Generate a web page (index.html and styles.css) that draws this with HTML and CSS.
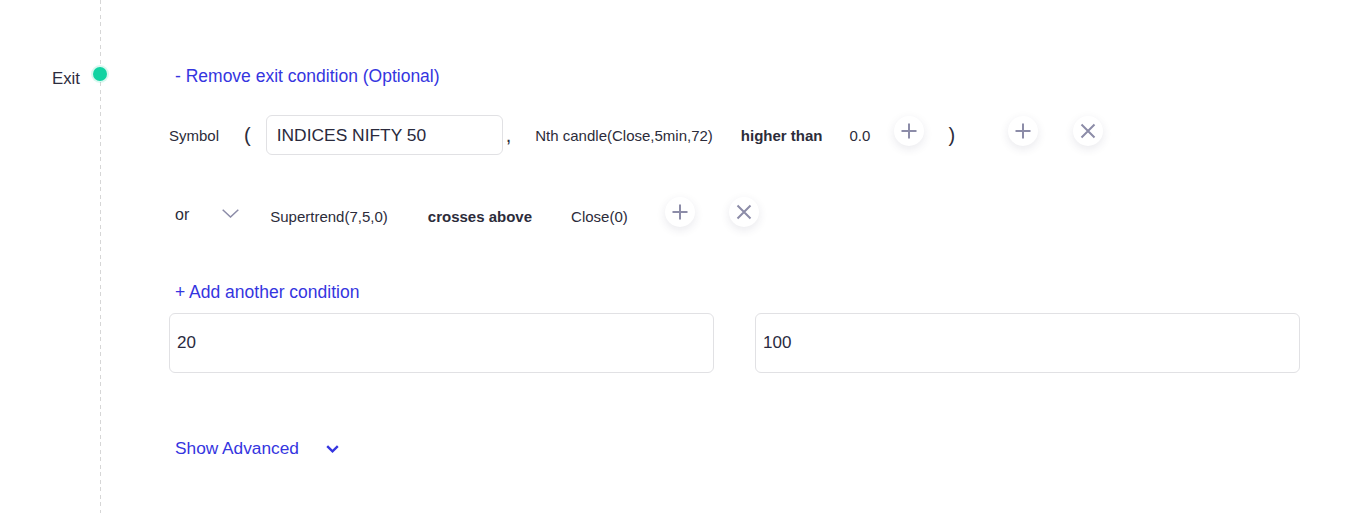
FILE: index.html
```html
<!DOCTYPE html>
<html>
<head>
<meta charset="utf-8">
<link rel="stylesheet" href="styles.css">
</head>
<body>
<div class="page">
  <div class="label-col"><span class="exit">Exit</span></div>
  <div class="rail"><span class="dot"></span></div>
  <div class="content">
    <div class="header"><a class="link">- Remove exit condition (Optional)</a></div>

    <div class="row row1">
      <span class="txt sym">Symbol</span>
      <span class="paren open">(</span>
      <div class="field"><span>INDICES NIFTY 50</span></div>
      <span class="paren comma">,</span>
      <span class="txt nth">Nth candle(Close,5min,72)</span>
      <span class="txt bold higher">higher than</span>
      <span class="txt val">0.0</span>
      <button class="circle btn-a" aria-label="add">
        <svg width="16" height="16" viewBox="0 0 16 16"><path d="M8 0.5V15.5M0.5 8H15.5" stroke="#8c8ca8" stroke-width="2" fill="none"/></svg>
      </button>
      <span class="paren close">)</span>
      <button class="circle btn-b" aria-label="add">
        <svg width="16" height="16" viewBox="0 0 16 16"><path d="M8 0.5V15.5M0.5 8H15.5" stroke="#8c8ca8" stroke-width="2" fill="none"/></svg>
      </button>
      <button class="circle btn-c" aria-label="remove">
        <svg width="16" height="16" viewBox="0 0 16 16"><path d="M1.5 1.5L14.5 14.5M14.5 1.5L1.5 14.5" stroke="#8c8ca8" stroke-width="2" fill="none"/></svg>
      </button>
    </div>

    <div class="row row2">
      <span class="or">or</span>
      <span class="chev">
        <svg width="17" height="9" viewBox="0 0 17 9"><path d="M0.7 0.7L8.5 8L16.3 0.7" stroke="#8c8ca8" stroke-width="1.5" fill="none"/></svg>
      </span>
      <span class="txt st">Supertrend(7,5,0)</span>
      <span class="txt bold crosses">crosses above</span>
      <span class="txt closev">Close(0)</span>
      <button class="circle btn-d" aria-label="add">
        <svg width="16" height="16" viewBox="0 0 16 16"><path d="M8 0.5V15.5M0.5 8H15.5" stroke="#8c8ca8" stroke-width="2" fill="none"/></svg>
      </button>
      <button class="circle btn-e" aria-label="remove">
        <svg width="16" height="16" viewBox="0 0 16 16"><path d="M1.5 1.5L14.5 14.5M14.5 1.5L1.5 14.5" stroke="#8c8ca8" stroke-width="2" fill="none"/></svg>
      </button>
    </div>

    <div class="add"><a class="link">+ Add another condition</a></div>

    <div class="inputs">
      <div class="box"><span>20</span></div>
      <div class="box"><span>100</span></div>
    </div>

    <div class="advanced">
      <a class="link adv">Show Advanced</a>
      <svg class="adv-chev" width="13" height="8" viewBox="0 0 13 8"><path d="M1.2 1.2L6.5 6.3L11.8 1.2" stroke="#3535e0" stroke-width="2.4" fill="none"/></svg>
    </div>
  </div>
</div>
</body>
</html>
```

FILE: styles.css
```css
html, body {
  margin: 0;
  padding: 0;
  background: #ffffff;
}

body {
  font-family: "Liberation Sans", Arial, sans-serif;
  color: #2c2c3a;
}

.page {
  display: flex;
  align-items: stretch;
  padding-left: 52px;
  min-height: 513px;
  box-sizing: border-box;
}

.label-col {
  width: 41px;
  flex: none;
}

.exit {
  display: block;
  margin-top: 69px;
  font-size: 16.8px;
  line-height: 20px;
  color: #2c2c3e;
}

.rail {
  width: 14px;
  flex: none;
  background-image: repeating-linear-gradient(to bottom, #d6d6d6 0 4px, transparent 4px 7.5px);
  background-size: 1px 100%;
  background-position: 7px 0;
  background-repeat: no-repeat;
}

.dot {
  display: block;
  width: 14px;
  height: 14px;
  margin-top: 67px;
  border-radius: 50%;
  background: #10d3a2;
  box-shadow: 0 0 0 2px rgba(16, 211, 162, 0.16);
}

.content {
  margin-left: 62px;
  width: 1131px;
  flex: none;
}

.link {
  color: #3535e0;
  font-size: 17.5px;
  line-height: 20px;
  cursor: pointer;
}

.header {
  margin-top: 66px;
  height: 20px;
  padding-left: 6px;
}

.row {
  display: flex;
  align-items: center;
  height: 40px;
}

.row1 {
  margin-top: 29px;
}

.row2 {
  margin-top: 42px;
}

.txt {
  font-size: 15px;
  line-height: 18px;
  color: #2c2c3a;
  white-space: nowrap;
}

.row1 .txt {
  margin-top: 2px;
}

.bold {
  font-weight: bold;
}

.paren {
  font-size: 20px;
  line-height: 24px;
  color: #2c2c3a;
}

.open { margin-left: 25px; }

.field {
  margin-left: 15px;
  width: 237px;
  height: 40px;
  box-sizing: border-box;
  border: 1px solid #e1e1e4;
  border-radius: 6px;
  display: flex;
  align-items: center;
  padding-left: 10px;
  font-size: 17.4px;
  color: #2a2a3c;
}

.comma { margin-left: 3px; }
.nth { margin-left: 24px; }
.higher { margin-left: 28px; }
.val { margin-left: 27px; }
.close { margin-left: 24px; }

.circle {
  width: 30px;
  height: 30px;
  padding: 0;
  border: none;
  border-radius: 50%;
  background: #ffffff;
  box-shadow: 0 3px 10px rgba(40, 40, 80, 0.10);
  display: flex;
  align-items: center;
  justify-content: center;
  flex: none;
  cursor: pointer;
}

.row1 .circle { margin-bottom: 8px; }
.row2 .circle { margin-bottom: 10px; }

.btn-a { margin-left: 24px; }
.btn-b { margin-left: 53px; }
.btn-c { margin-left: 35px; }

.or {
  margin-left: 6px;
  font-size: 16px;
  line-height: 20px;
  margin-bottom: 4px;
  color: #2c2c3a;
}

.chev {
  margin-left: 33px;
  display: flex;
  margin-bottom: 7px;
}

.st { margin-left: 31px; }
.crosses { margin-left: 40px; }
.closev { margin-left: 39px; }
.btn-d { margin-left: 37px; }
.btn-e { margin-left: 34px; }

.add {
  margin-top: 45px;
  height: 20px;
  padding-left: 6px;
}

.inputs {
  margin-top: 11px;
  display: flex;
  gap: 41px;
  width: 1131px;
}

.box {
  flex: 1;
  height: 60px;
  box-sizing: border-box;
  border: 1px solid #e1e1e4;
  border-radius: 6px;
  display: flex;
  align-items: center;
  padding-left: 7px;
  font-size: 17px;
  color: #2a2a40;
}

.advanced {
  margin-top: 65px;
  height: 20px;
  padding-left: 6px;
  display: flex;
  align-items: center;
}

.adv {
  font-size: 17.3px;
}

.adv-chev {
  margin-left: 27px;
  margin-top: 1px;
}
```
